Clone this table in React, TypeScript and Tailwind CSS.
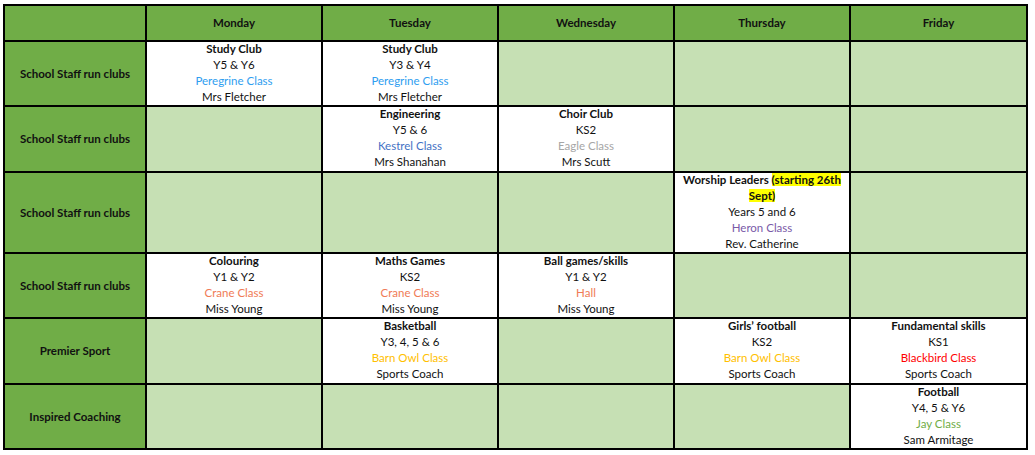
import React from "react";

type Line = { t: React.ReactNode; c?: string; b?: boolean };
type Cell = Line[] | null;

const days = ["Monday", "Tuesday", "Wednesday", "Thursday", "Friday"];

const rows: { label: string; cells: Cell[] }[] = [
  {
    label: "School Staff run clubs",
    cells: [
      [
        { t: "Study Club", b: true },
        { t: "Y5 & Y6" },
        { t: "Peregrine Class", c: "text-[#2f9ef0]" },
        { t: "Mrs Fletcher" },
      ],
      [
        { t: "Study Club", b: true },
        { t: "Y3 & Y4" },
        { t: "Peregrine Class", c: "text-[#2f9ef0]" },
        { t: "Mrs Fletcher" },
      ],
      null,
      null,
      null,
    ],
  },
  {
    label: "School Staff run clubs",
    cells: [
      null,
      [
        { t: "Engineering", b: true },
        { t: "Y5 & 6" },
        { t: "Kestrel Class", c: "text-[#4472c4]" },
        { t: "Mrs Shanahan" },
      ],
      [
        { t: "Choir Club", b: true },
        { t: "KS2" },
        { t: "Eagle Class", c: "text-[#a6a6a6]" },
        { t: "Mrs Scutt" },
      ],
      null,
      null,
    ],
  },
  {
    label: "School Staff run clubs",
    cells: [
      null,
      null,
      null,
      [
        {
          t: (
            <>
              Worship Leaders <span className="bg-[#ffff00]">(starting 26th</span>
              <br />
              <span className="bg-[#ffff00]">Sept)</span>
            </>
          ),
          b: true,
        },
        { t: "Years 5 and 6" },
        { t: "Heron Class", c: "text-[#7a5aa8]" },
        { t: "Rev. Catherine" },
      ],
      null,
    ],
  },
  {
    label: "School Staff run clubs",
    cells: [
      [
        { t: "Colouring", b: true },
        { t: "Y1 & Y2" },
        { t: "Crane Class", c: "text-[#f07b55]" },
        { t: "Miss Young" },
      ],
      [
        { t: "Maths Games", b: true },
        { t: "KS2" },
        { t: "Crane Class", c: "text-[#f07b55]" },
        { t: "Miss Young" },
      ],
      [
        { t: "Ball games/skills", b: true },
        { t: "Y1 & Y2" },
        { t: "Hall", c: "text-[#f07b55]" },
        { t: "Miss Young" },
      ],
      null,
      null,
    ],
  },
  {
    label: "Premier Sport",
    cells: [
      null,
      [
        { t: "Basketball", b: true },
        { t: "Y3, 4, 5 & 6" },
        { t: "Barn Owl Class", c: "text-[#ffc000]" },
        { t: "Sports Coach" },
      ],
      null,
      [
        { t: "Girls\u2019 football", b: true },
        { t: "KS2" },
        { t: "Barn Owl Class", c: "text-[#ffc000]" },
        { t: "Sports Coach" },
      ],
      [
        { t: "Fundamental skills", b: true },
        { t: "KS1" },
        { t: "Blackbird Class", c: "text-[#ff0000]" },
        { t: "Sports Coach" },
      ],
    ],
  },
  {
    label: "Inspired Coaching",
    cells: [
      null,
      null,
      null,
      null,
      [
        { t: "Football", b: true },
        { t: "Y4, 5 & Y6" },
        { t: "Jay Class", c: "text-[#70ad47]" },
        { t: "Sam Armitage" },
      ],
    ],
  },
];

export default function App() {
  return (
    <div
      className="w-[1035px] h-[455px] bg-white pl-[3px] pt-[4px] text-[11.5px] leading-[16px] text-[#111]"
      style={{ fontFamily: "Lato, 'Liberation Sans', sans-serif" }}
    >
      <div className="grid w-fit grid-cols-[140px_174px_174px_174px_174px_175px] grid-rows-[34px_63px_64px_79px_63px_64px_63px] gap-[2px] bg-black p-[2px]">
        <div className="bg-[#70ad47]" />
        {days.map((d) => (
          <div
            key={d}
            className="flex items-center justify-center bg-[#70ad47] font-bold"
          >
            {d}
          </div>
        ))}
        {rows.map((r, ri) => (
          <React.Fragment key={ri}>
            <div className="flex items-center justify-center bg-[#70ad47] font-bold">
              {r.label}
            </div>
            {r.cells.map((cell, ci) =>
              cell ? (
                <div
                  key={ci}
                  className="flex flex-col items-center overflow-hidden bg-white text-center"
                >
                  <div className="-mt-px flex flex-col items-center">
                    {cell.map((l, li) => (
                      <div key={li} className={`${l.b ? "font-bold" : ""} ${l.c ?? ""}`}>
                        {l.t}
                      </div>
                    ))}
                  </div>
                </div>
              ) : (
                <div key={ci} className="bg-[#c6e0b4]" />
              )
            )}
          </React.Fragment>
        ))}
      </div>
    </div>
  );
}
